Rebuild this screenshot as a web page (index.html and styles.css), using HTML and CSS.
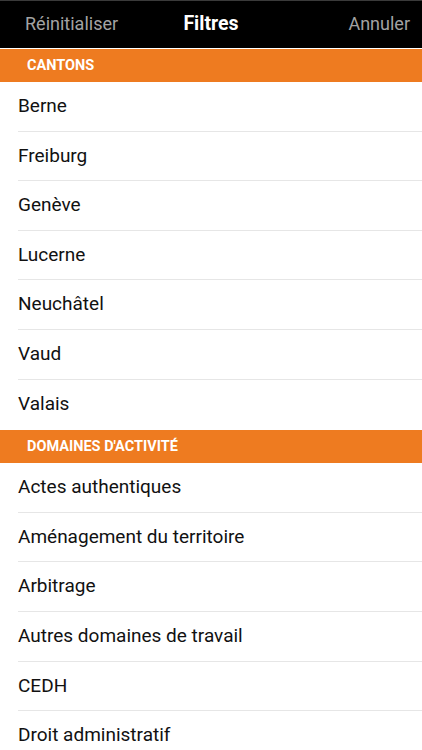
FILE: index.html
```html
<!DOCTYPE html>
<html>
<head>
	<title>Filtres</title>
	<link rel="stylesheet" href="styles.css">
</head>
<body>

<div id="topbar">
	<span class="side left">Réinitialiser</span>
	<span id="title">Filtres</span>
	<span class="side right">Annuler</span>
</div>

<div class="section">CANTONS</div>
<ul class="list">
	<li>Berne</li>
	<li>Freiburg</li>
	<li>Genève</li>
	<li>Lucerne</li>
	<li>Neuchâtel</li>
	<li>Vaud</li>
	<li>Valais</li>
</ul>

<div class="section">DOMAINES D'ACTIVITÉ</div>
<ul class="list">
	<li>Actes authentiques</li>
	<li>Aménagement du territoire</li>
	<li>Arbitrage</li>
	<li>Autres domaines de travail</li>
	<li>CEDH</li>
	<li class="last">Droit administratif</li>
</ul>

</body>
</html>
```

FILE: styles.css
```css
body{
	margin: 0;
	background: white;
	font-family: Roboto, "Liberation Sans", sans-serif;
	overflow: hidden;
}

#topbar{
	background: black;
	border-top: 1px solid #3a3a3a;
	height: 48px;
	box-sizing: border-box;
	display: grid;
	grid-template-columns: 1fr auto 1fr;
	align-items: center;
	padding: 0 12px 3px 12px;
}

.side{
	color: #a3a3a3;
	font-size: 18px;
}

.left{
	padding-left: 13px;
}

.right{
	text-align: right;
}

#title{
	color: white;
	font-size: 19.5px;
	font-weight: bold;
}

.section{
	background: #ee7b20;
	color: white;
	font-size: 14.5px;
	font-weight: bold;
	height: 33px;
	line-height: 33px;
	padding-left: 27px;
	margin-top: 1px;
}

.list{
	list-style: none;
	margin: 0;
	padding: 0 0 0 18px;
}

.list li{
	height: 49.6px;
	line-height: 48px;
	box-sizing: border-box;
	font-size: 19px;
	color: #111;
	border-bottom: 1px solid #e6e6e6;
}

.list li:last-child{
	border-bottom: none;
}

.list li.last{
	height: 40px;
	line-height: 48px;
}
```
